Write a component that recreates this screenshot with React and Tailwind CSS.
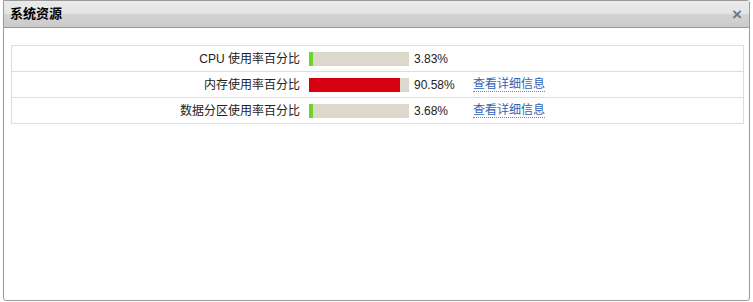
import React from 'react';

const rows = [
    { label: 'CPU 使用率百分比', pct: 3.83, link: false },
    { label: '内存使用率百分比', pct: 90.58, link: true },
    { label: '数据分区使用率百分比', pct: 3.68, link: true },
];

const Bar = ({ pct }) => {
    const color = pct > 80 ? 'bg-[#d7000f]' : 'bg-[#6fd12b]';
    return (
        <div className="w-[100px] h-[14px] bg-[#dcd8cb]">
            <div className={`h-full ${color}`} style={{ width: `${Math.max(pct, 4)}%` }} />
        </div>
    );
};

export default function App() {
    return (
        <div className="w-[753px] h-[302px] bg-white pl-[3px] font-['Liberation_Sans','Noto_Sans_CJK_SC',sans-serif] text-[12px] text-[#222]">
            <div className="w-[747px] h-[301px] border border-[#9a9a9a] rounded-b-[3px] rounded-tr-[3px] flex flex-col">
                <div className="h-[27px] shrink-0 border-b border-[#9a9a9a] bg-[linear-gradient(#eaeaea_0%,#e4e4e4_48%,#d3d3d3_52%,#cbcbcb_100%)] flex items-center justify-between pl-[6px] pr-[7px]">
                    <span className="font-bold text-[13px] text-black">系统资源</span>
                    <span className="text-[#777] text-[17px] font-bold leading-none">×</span>
                </div>
                <div className="pt-[17px] pl-[7px] pr-[5px]">
                    <div className="border border-[#d8e0df]">
                        {rows.map((r, i) => (
                            <div
                                key={r.label}
                                className={`flex items-center ${i > 0 ? 'h-[26px] border-t border-[#d8e0df]' : 'h-[25px]'}`}
                            >
                                <div className="w-[297px] text-right pr-[9px]">{r.label}</div>
                                <Bar pct={r.pct} />
                                <div className="w-[64px] pl-[5px]">{r.pct.toFixed(2)}%</div>
                                {r.link && (
                                    <a className="text-[#2f63b8] border-b border-dotted border-[#5a8ad6] leading-[13px]">
                                        查看详细信息
                                    </a>
                                )}
                            </div>
                        ))}
                    </div>
                </div>
            </div>
        </div>
    );
}
